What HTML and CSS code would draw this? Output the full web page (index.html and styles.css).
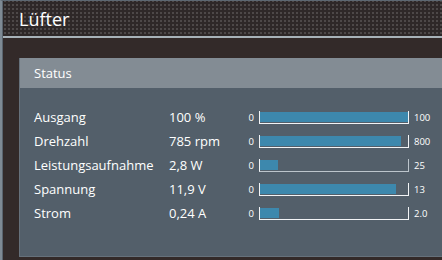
FILE: index.html
```html
<!DOCTYPE html>
<html lang="de">
<head>
    <meta charset="UTF-8" />
    <meta name="viewport" content="width=device-width, initial-scale=1.0" />
    <title>Lüfter</title>
    <link rel="stylesheet" href="styles.css">
</head>
<body>
    <div class="app">
        <header class="page-head">
            <h1>Lüfter</h1>
        </header>

        <main class="content">
            <section class="panel">
                <div class="panel-head">Status</div>
                <div class="panel-body">
                    <div class="row">
                        <span class="label">Ausgang</span>
                        <span class="value">100 %</span>
                        <span class="min">0</span>
                        <div class="bar"><div class="fill" style="width: 100%"></div></div>
                        <span class="max">100</span>
                    </div>
                    <div class="row">
                        <span class="label">Drehzahl</span>
                        <span class="value">785 rpm</span>
                        <span class="min">0</span>
                        <div class="bar"><div class="fill" style="width: 95.5%"></div></div>
                        <span class="max">800</span>
                    </div>
                    <div class="row">
                        <span class="label">Leistungsaufnahme</span>
                        <span class="value">2,8 W</span>
                        <span class="min">0</span>
                        <div class="bar dim"><div class="fill" style="width: 12%"></div></div>
                        <span class="max">25</span>
                    </div>
                    <div class="row">
                        <span class="label">Spannung</span>
                        <span class="value">11,9 V</span>
                        <span class="min">0</span>
                        <div class="bar"><div class="fill" style="width: 92%"></div></div>
                        <span class="max">13</span>
                    </div>
                    <div class="row">
                        <span class="label">Strom</span>
                        <span class="value">0,24 A</span>
                        <span class="min">0</span>
                        <div class="bar"><div class="fill" style="width: 13%"></div></div>
                        <span class="max">2.0</span>
                    </div>
                </div>
            </section>
        </main>
    </div>
</body>
</html>
```

FILE: styles.css
```css
html, body {
    margin: 0;
    height: 100%;
}
body {
    font-family: "Open Sans", "Noto Sans", sans-serif;
    background: #332a29;
    color: #fff;
    overflow: hidden;
    border-top: 1px solid #5d6872;
    border-left: 2px solid #7e8a94;
    box-sizing: border-box;
}
.app {
    border-left: 1px solid #5a646e;
    height: 100%;
    box-sizing: border-box;
}
.page-head {
    height: 35px;
    background-color: #4d4848;
    background-image:
        linear-gradient(90deg, transparent 2px, #2e2828 2px),
        linear-gradient(transparent 2px, #2e2828 2px);
    background-size: 4px 4px;
    background-position: 1px 3px;
    border-bottom: 2px solid #a8b2b8;
    display: flex;
    align-items: center;
    padding-left: 16px;
}
.page-head h1 {
    margin: 0;
    font-size: 18px;
    font-weight: 400;
    line-height: 1;
    padding-top: 1px;
}
.content {
    padding: 20px 0 0 16px;
}
.panel {
    background: #535f6a;
    border-left: 1px solid #66717b;
    border-bottom: 1px solid #66717b;
    height: 199px;
    box-sizing: border-box;
}
.panel-head {
    height: 30px;
    background: #838c94;
    display: flex;
    align-items: center;
    padding-left: 14px;
    font-size: 13px;
}
.panel-body {
    padding: 17px 0 0 14px;
}
.row {
    display: grid;
    grid-template-columns: 135px 70px 20px 150px auto;
    align-items: center;
    height: 24px;
    font-size: 13px;
}
.min, .max {
    font-size: 9.5px;
}
.min {
    text-align: right;
    padding-right: 5px;
}
.max {
    padding-left: 5px;
}
.bar {
    height: 13px;
    border: 1px solid #f2f4f6;
    border-top: none;
    box-sizing: border-box;
    padding: 1px 0 0;
}
.bar.dim {
    border-color: #bcc5cc;
    border-left-color: #f2f4f6;
}
.fill {
    height: 10px;
    background: #3d88ad;
}
```
